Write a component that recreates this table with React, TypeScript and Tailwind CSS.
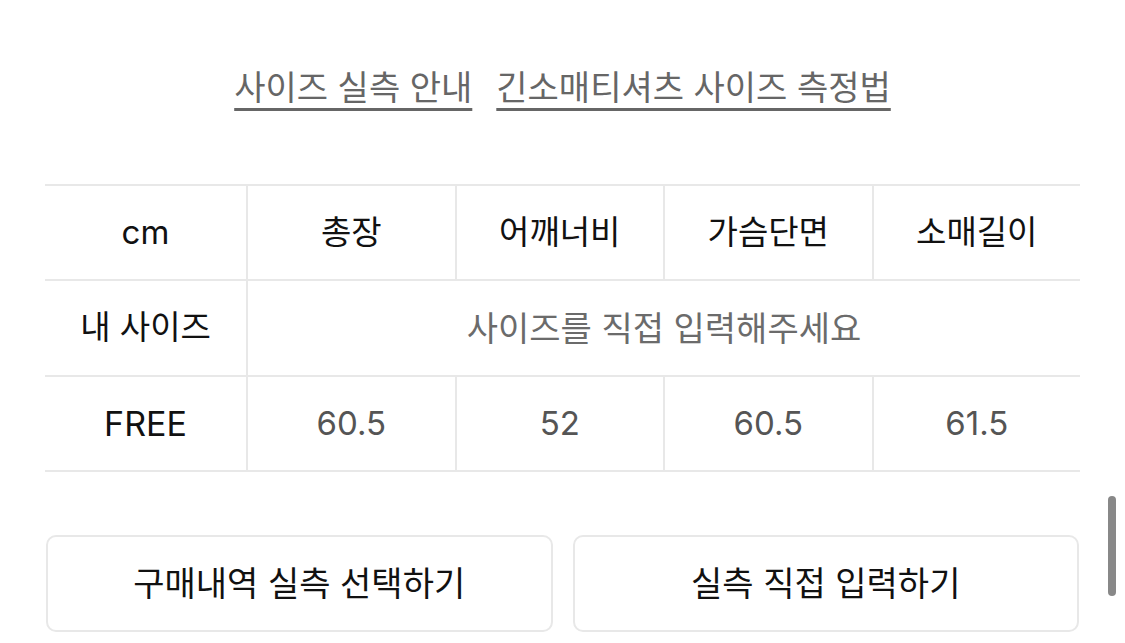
import React from "react";

const font = { fontFamily: 'Inter, "Noto Sans CJK KR", "Noto Sans", sans-serif' };

const headers = ["총장", "어깨너비", "가슴단면", "소매길이"];
const free = ["60.5", "52", "60.5", "61.5"];

export default function App() {
  return (
    <div
      className="relative w-[1125px] h-[643px] overflow-hidden bg-white text-[#111111]"
      style={font}
    >
      {/* guide links */}
      <div className="flex justify-center gap-[24px] pt-[63px] text-[34px] leading-[50px] text-[#666666]">
        <span className="underline decoration-[3px] underline-offset-[8px]">사이즈 실측 안내</span>
        <span className="underline decoration-[3px] underline-offset-[8px]">긴소매티셔츠 사이즈 측정법</span>
      </div>

      {/* size table */}
      <div className="mx-[45px] mt-[71px] border-t-2 border-b-2 border-[#e8e8e8]">
        <div className="flex h-[95px] border-b-2 border-[#e8e8e8]">
          <div className="flex w-[203px] items-center justify-center border-r-2 border-[#e8e8e8] text-[33px]">
            cm
          </div>
          {headers.map((h, i) => (
            <div
              key={h}
              className={
                "flex flex-1 items-center justify-center text-[33px] " +
                (i < 3 ? "border-r-2 border-[#e8e8e8]" : "")
              }
            >
              {h}
            </div>
          ))}
        </div>
        <div className="flex h-[96px] border-b-2 border-[#e8e8e8]">
          <div className="flex w-[203px] items-center justify-center border-r-2 border-[#e8e8e8] text-[33px]">
            내 사이즈
          </div>
          <div className="flex flex-1 items-center justify-center text-[34px] text-[#6b6b6b]">
            사이즈를 직접 입력해주세요
          </div>
        </div>
        <div className="flex h-[93px]">
          <div className="flex w-[203px] items-center justify-center border-r-2 border-[#e8e8e8] text-[34px]">
            FREE
          </div>
          {free.map((v, i) => (
            <div
              key={i}
              className={
                "flex flex-1 items-center justify-center text-[33px] text-[#555555] " +
                (i < 3 ? "border-r-2 border-[#e8e8e8]" : "")
              }
            >
              {v}
            </div>
          ))}
        </div>
      </div>

      {/* actions */}
      <div className="mx-[46px] mt-[63px] flex gap-[20px]">
        <button className="flex h-[97px] flex-1 items-center justify-center rounded-[10px] border-2 border-[#e8e8e8] bg-white text-[34px]">
          구매내역 실측 선택하기
        </button>
        <button className="flex h-[97px] flex-1 items-center justify-center rounded-[10px] border-2 border-[#e8e8e8] bg-white text-[34px]">
          실측 직접 입력하기
        </button>
      </div>

      {/* scrollbar thumb */}
      <div className="absolute left-[1108px] top-[496px] h-[100px] w-[8px] rounded-full bg-[#888888]" />
    </div>
  );
}
